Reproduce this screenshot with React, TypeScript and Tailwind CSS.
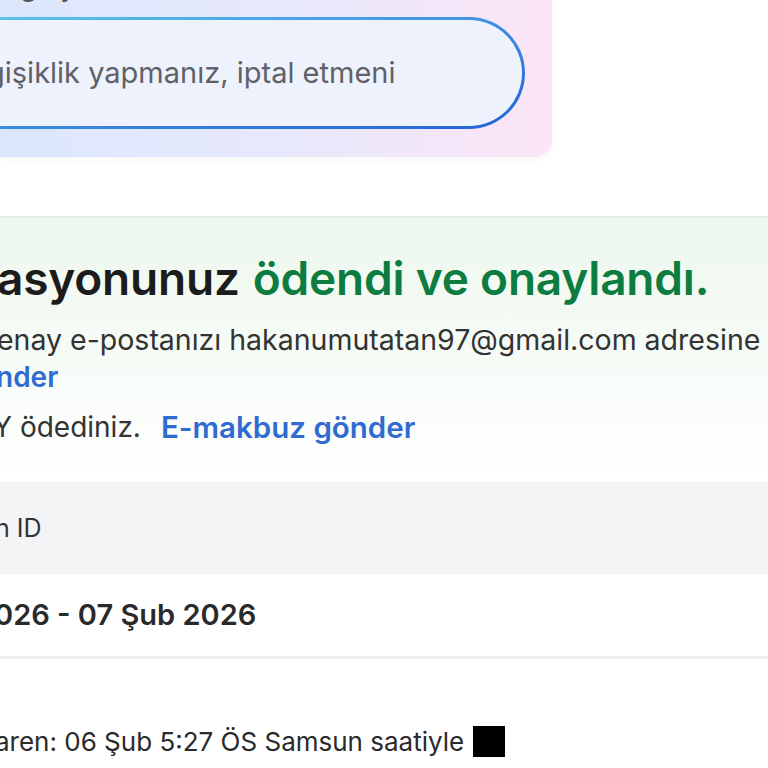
import React from 'react';

const font = { fontFamily: 'Inter, "Noto Sans", sans-serif' };

export default function App() {
  return (
    <div className="w-[768px] h-[768px] overflow-hidden bg-white text-[#1f1f1f]" style={font}>
      {/* top gradient card (cut off) */}
      <div className="w-[552px] h-[157px] rounded-br-2xl bg-gradient-to-r from-[#dbe7fc] via-[#e7e8fc] to-[#fbe5f6] shadow-[0_2px_6px_rgba(0,0,0,0.04)] overflow-hidden">
        <div className="h-[17px] overflow-hidden">
          <div className="-mt-[31px] pl-[20px] text-[28px] leading-[34px] text-[#555]">g  ay</div>
        </div>
        <div className="-ml-[60px] w-[585px] h-[112px] rounded-full p-[3px] bg-gradient-to-br from-[#5cc9ea] via-[#3f8fe0] to-[#2563d6]">
          <div className="h-full w-full rounded-full bg-[#eef2fc] flex items-center pl-[50px]">
            <span className="-ml-[6px] text-[29px] text-[#5f6168] whitespace-nowrap">ğişiklik yapmanız, iptal etmeni</span>
          </div>
        </div>
      </div>

      {/* confirmation section */}
      <div className="mt-[59px] border-t-2 border-[#e6ebe6] bg-gradient-to-b from-[#edf8ee] via-[#f6fbf6] to-white h-[264px]">
        <div className="h-[34px]" />
        <div className="h-[52px] flex items-center -ml-[3px] text-[46px] font-semibold tracking-[-0.2px] whitespace-nowrap">
          <span className="text-[#1c1c1c]">asyonunuz</span>
          <span className="ml-[13px] text-[#0d7c40]">ödendi ve onaylandı.</span>
        </div>
        <div className="h-[17px]" />
        <div className="h-[38px] flex items-center -ml-[3px] text-[28.5px] text-[#333] whitespace-nowrap">
          enay e-postanızı hakanumutatan97@gmail.com adresine
        </div>
        <div className="h-[36px] flex items-center -ml-[4px] text-[28px] font-semibold text-[#2f6bd1] whitespace-nowrap">
          nder
        </div>
        <div className="h-[14px]" />
        <div className="h-[36px] flex items-center -ml-[7px] text-[28px] whitespace-nowrap">
          <span className="text-[#333]">Y ödediniz.</span>
          <span className="ml-[20px] text-[29.5px] font-semibold text-[#2f6bd1]">E-makbuz gönder</span>
        </div>
      </div>

      {/* details table */}
      <div className="h-[2px]" />
      <div className="h-[92px] bg-[#f3f4f6] border-t border-[#eceef0] flex items-center">
        <span className="-ml-[5px] text-[25px] text-[#333]">n ID</span>
      </div>
      <div className="h-[85px] bg-white border-b-[3px] border-[#eceef0] flex items-center">
        <span className="-ml-[6px] text-[29px] font-semibold text-[#2a2a2a] whitespace-nowrap">026 - 07 Şub 2026</span>
      </div>

      <div className="h-[65px]" />
      <div className="flex items-center gap-[9px] h-[34px]">
        <span className="-ml-[5px] text-[26px] text-[#2a2a2a] whitespace-nowrap">aren: 06 Şub 5:27 ÖS Samsun saatiyle</span>
        <span className="w-[32px] h-[31px] bg-black" />
      </div>
    </div>
  );
}
